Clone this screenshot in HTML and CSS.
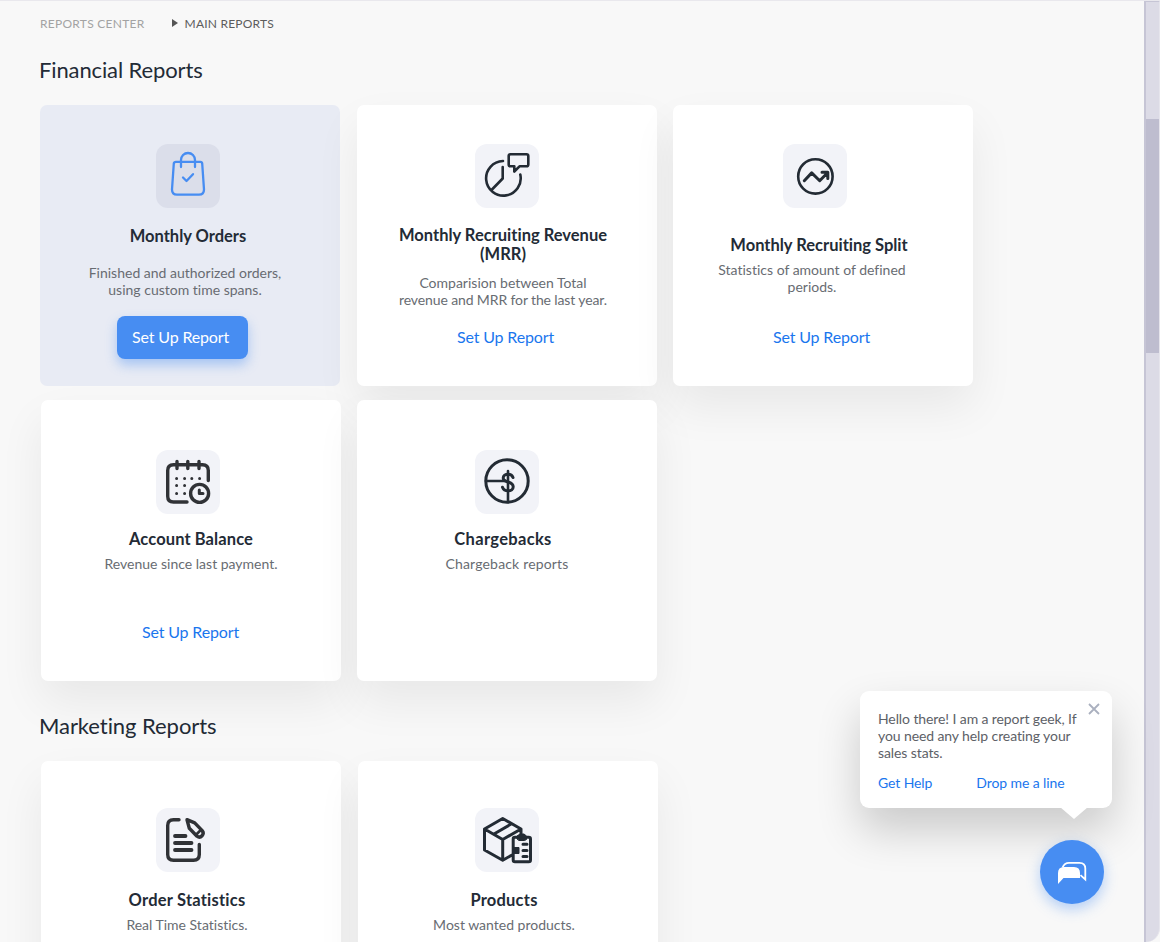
FILE: index.html
```html
<!DOCTYPE html>
<html lang="en">
<head>
<meta charset="utf-8">
<title>Main Reports</title>
<link rel="stylesheet" href="styles.css">
</head>
<body>
<div class="app">
<main class="page">
  <nav class="crumbs"><span class="crumb">REPORTS CENTER</span><i class="arrow"></i><span class="crumb current">MAIN REPORTS</span></nav>
  <h1 class="heading">Financial Reports</h1>
  <div class="row first">
    <article class="card active c-orders">
      <div class="tile"><svg viewBox="0 0 64 64"><path d="M20 17.8H44.5Q46 17.8 46.2 19.5L48 45.5Q48 50.7 43 50.7H21Q16 50.7 16 45.5L17.8 19.5Q18 17.8 20 17.8ZM25 23V16a7 7 0 0 1 14 0V23M27 33.5L30.5 37L37 30.2"/></svg></div>
      <h2>Monthly Orders</h2>
      <p>Finished and authorized orders,<br>using custom time spans.</p>
      <a class="button">Set Up Report</a>
    </article>
    <article class="card c-mrr">
      <div class="tile"><svg viewBox="0 0 64 64"><path d="M28 17A17.3 17.3 0 1 0 45.3 30.5M27.7 23V34.5L16.5 46M35.5 10.2H51.5Q53.3 10.2 53.3 12V20.5Q53.3 22.3 51.5 22.3H44.5L39.3 27.5V22.3H35.5Q33.7 22.3 33.7 20.5V12Q33.7 10.2 35.5 10.2Z"/></svg></div>
      <h2>Monthly Recruiting Revenue<br>(MRR)</h2>
      <p>Comparision between Total<br><span class="tight">revenue and MRR for the last year.</span></p>
      <a class="link">Set Up Report</a>
    </article>
    <article class="card c-split">
      <div class="tile"><svg viewBox="0 0 64 64"><circle cx="32.4" cy="32.4" r="17.2"/><path class="bold" d="M21.3 36.7L28.7 28.9L36.7 36.7L44.3 29M39 28.3H44.8V34.5"/></svg></div>
      <h2>Monthly Recruiting Split</h2>
      <p>Statistics of amount of defined<br>periods.</p>
      <a class="link">Set Up Report</a>
    </article>
  </div>
  <div class="row second">
    <article class="card c-balance">
      <div class="tile"><svg viewBox="0 0 64 64" class="grey"><path class="heavy" d="M52.3 30.5V20.5Q52.3 14.7 46.5 14.7H17.5Q11.7 14.7 11.7 20.5V46.2Q11.7 52 17.5 52H31M21 11.5V18.5M31.8 11.5V18.5M43 11.5V18.5"/><circle class="heavy" cx="43.6" cy="43.4" r="9"/><path class="bold" d="M43.3 40V43.6H47"/><path class="bold" d="M20.6 28.4h.01M28.6 28.4h.01M35.8 28.4h.01M43.6 28.4h.01M20.6 35.4h.01M28.6 35.4h.01M20.6 43.4h.01M28.6 43.4h.01"/></svg></div>
      <h2>Account Balance</h2>
      <p>Revenue since last payment.</p>
      <a class="link">Set Up Report</a>
    </article>
    <article class="card c-charge">
      <div class="tile"><svg viewBox="0 0 64 64"><g class="bold"><circle cx="32" cy="31" r="21.2"/><path d="M38 27.5C37 25 35 24.3 33.2 24.3C30.3 24.3 28.2 25.8 28.2 28C28.2 33.2 38.2 30.8 38.2 36.7C38.2 39.3 36 40.8 33.2 40.8C30.2 40.8 28.3 39.4 27.5 37.2"/></g><path d="M11 31H30M33 21V52"/></svg></div>
      <h2>Chargebacks</h2>
      <p>Chargeback reports</p>
    </article>
  </div>
  <h1 class="heading marketing">Marketing Reports</h1>
  <div class="row third">
    <article class="card c-stats">
      <div class="tile"><svg viewBox="0 0 64 64" class="grey"><path class="heavy" d="M23 11.7H17.5Q11.7 11.7 11.7 17.5V46.5Q11.7 52.3 17.5 52.3H37.5Q43.3 52.3 43.3 46.5V36.5"/><path class="lines" d="M19 28H29.5M19 35H35.5M19 42H35.5"/><path class="heavy" d="M31 11.7L38.7 14.8L46.2 22.7C49 26 44.7 31 41 28.2L33.3 20.3Z"/><path d="M39.8 27L44.8 22"/></svg></div>
      <h2>Order Statistics</h2>
      <p>Real Time Statistics.</p>
    </article>
    <article class="card c-products">
      <div class="tile"><svg viewBox="0 0 64 64"><path class="bold" d="M37 47L27.7 52.3L9.5 42V21L27.7 10.5L46 21V27M9.5 21L27.7 31.5V52M27.7 31.5L46 21M19 26L36.5 15.8M40 29.3H53.7Q55.5 29.3 55.5 31V52Q55.5 53.7 53.7 53.7H40Q38.2 53.7 38.2 52V31Q38.2 29.3 40 29.3ZM48 36.3H52M48 42.5H52M48 48.5H52"/><path class="solid" d="M42 30.5V28L45 26H49L51.5 28V31.5L49.5 32.5H44ZM39 39.5H44V45.5H39Z"/></svg></div>
      <h2>Products</h2>
      <p>Most wanted products.</p>
    </article>
  </div>
</main>
<aside class="scroll"><div class="thumb"></div></aside>
</div>
<section class="help">
  <p>Hello there! I am a report geek, If<br>you need any help creating your<br>sales stats.</p>
  <div class="actions"><a>Get Help</a><a>Drop me a line</a></div>
  <svg class="close" viewBox="0 0 12 12"><path d="M1 1L11 11M11 1L1 11"/></svg>
</section>
<button class="chat" aria-label="Chat"><svg viewBox="0 0 64 64"><path class="fill" d="M18 44V33Q18 27 24 27H34Q40 27 40 33V38H23.5Z"/><path d="M22.5 27.5Q24.5 22.8 29 22.8H39.5Q45.3 22.8 45.3 28.5V39.5L40.5 35.2"/></svg></button>
</body>
</html>
```
FILE: styles.css
```css
* { box-sizing: border-box; }
body { margin: 0; background: #f8f8f8; font-family: Lato, sans-serif; color: #232b36; font-variant-ligatures: none; }
.app { display: flex; height: 942px; overflow: hidden; border-top: 1px solid #e9e8ed; }
.page { flex: 1; padding: 13px 0 0 39px; }
.crumbs { display: flex; align-items: center; height: 18px; padding-left: 1px; font-size: 12px; }
.crumb { color: #a3a3a3; letter-spacing: .27px; }
.crumb.current { color: #5c5c5c; letter-spacing: .2px; }
.arrow { border-left: 6px solid #555; border-top: 4px solid transparent; border-bottom: 4px solid transparent; margin: 0 7px 1px 27px; }
.heading { margin: 23px 0 0; height: 30px; font-size: 22px; line-height: 30px; font-weight: 400; letter-spacing: -.12px; white-space: nowrap; }
.row { display: flex; gap: 16px; }
.first { margin: 20px 0 0 1px; }
.second { margin: 14px 0 0 2px; }
.third { margin: 20px 0 0 2px; gap: 17px; }
.marketing { margin-top: 30px; letter-spacing: -.06px; }
.card { flex: none; position: relative; width: 300px; height: 281px; border-radius: 7px; background: #fff; box-shadow: 0 21px 46px rgba(0, 0, 0, .065); display: flex; flex-direction: column; align-items: center; white-space: nowrap; }
.active { background: #e8ebf4; box-shadow: none; margin-right: 1px; }
.tile { width: 64px; height: 64px; border-radius: 12px; background: #f2f3f8; }
.active .tile { background: #dbdeea; }
.tile svg { display: block; fill: none; stroke: #232b34; stroke-width: 2.6; stroke-linecap: round; stroke-linejoin: round; }
.active svg { stroke: #478df2; stroke-width: 2.3; }
.tile svg.grey { stroke: #303236; }
.bold { stroke-width: 3; }
.heavy { stroke-width: 3.4; }
.lines { stroke-width: 3.8; }
.solid { fill: #232b34; stroke-width: 1; }
.card h2 { margin: 0; font-size: 16.5px; line-height: 19px; font-weight: 700; text-align: center; }
.card p { margin: 0; font-size: 14px; line-height: 17px; color: #686c72; text-align: center; }
.tight { letter-spacing: -.12px; }
.link { font-size: 16px; line-height: 20px; color: #1a76ee; letter-spacing: -.15px; }
.button { width: 131px; height: 43px; padding-left: 15px; border-radius: 8px; background: #478df2; color: #fff; font-size: 16px; line-height: 42px; letter-spacing: -.15px; box-shadow: 0 6px 12px rgba(71, 141, 242, .4); }
.c-orders .tile { margin: 39px 4px 0 0; }
.c-orders h2 { margin: 19px 4px 0 0; }
.c-orders p { margin: 18px 10px 0 0; }
.c-orders .button { margin: 18px 15px 0 0; }
.c-mrr .tile { margin-top: 39px; }
.c-mrr h2 { margin: 18px 8px 0 0; }
.c-mrr p { margin: 10px 8px 0 0; }
.c-mrr .link { margin: 19px 3px 0 0; }
.c-split .tile { margin: 39px 16px 0 0; }
.c-split h2 { margin: 28px 8px 0 0; }
.c-split p { margin: 6px 22px 0 0; }
.c-split .link { margin: 32px 3px 0 0; }
.c-balance .tile { margin: 50px 6px 0 0; }
.c-balance h2, .c-charge h2 { margin-top: 16px; }
.c-balance p, .c-charge p { margin-top: 6px; }
.c-balance h2 { letter-spacing: .1px; }
.c-balance .link { margin: 50px 1px 0 0; }
.c-charge .tile { margin-top: 50px; }
.c-charge h2 { margin-right: 8px; letter-spacing: .32px; }
.c-charge p { letter-spacing: .17px; }
.c-stats .tile { margin: 47px 6px 0 0; }
.c-products .tile { margin: 47px 8px 0 6px; }
.c-stats h2, .c-products h2 { margin: 19px 8px 0 0; letter-spacing: .22px; }
.c-stats p, .c-products p { margin: 6px 8px 0 0; }
.scroll { width: 16px; margin-top: -1px; border: solid #c6c5d5; border-width: 2px 0 0 2px; border-right: 1px solid #e6e5ec; border-bottom-right-radius: 14px; background: #dcdbe6; }
.thumb { height: 234px; margin-top: 117px; background: #bebdcf; }
.help { position: absolute; left: 860px; top: 691px; width: 252px; height: 117px; padding: 19px 18px 0; border-radius: 9px; background: #fff; box-shadow: 0 22px 44px rgba(0, 0, 0, .19); white-space: nowrap; letter-spacing: -.1px; }
.help::after { content: ""; position: absolute; left: 200px; top: 116px; border: solid transparent; border-width: 12px 14px 0; border-top-color: #fff; }
.help p { margin: 0; font-size: 14px; line-height: 17px; color: #5d6167; }
.actions { display: flex; margin-top: 13px; gap: 44px; font-size: 14px; line-height: 17px; color: #1a76ee; }
.close { position: absolute; left: 228px; top: 12px; width: 12px; height: 12px; fill: none; stroke: #aab0bf; stroke-width: 1.8; }
.chat { position: absolute; left: 1040px; top: 840px; width: 64px; height: 64px; padding: 0; border: 0; border-radius: 50%; background: #478df2; box-shadow: 0 5px 14px rgba(71, 141, 242, .4); }
.chat svg { display: block; fill: none; stroke: #fff; stroke-width: 1.8; }
.chat .fill { fill: #fff; stroke: none; }
```
